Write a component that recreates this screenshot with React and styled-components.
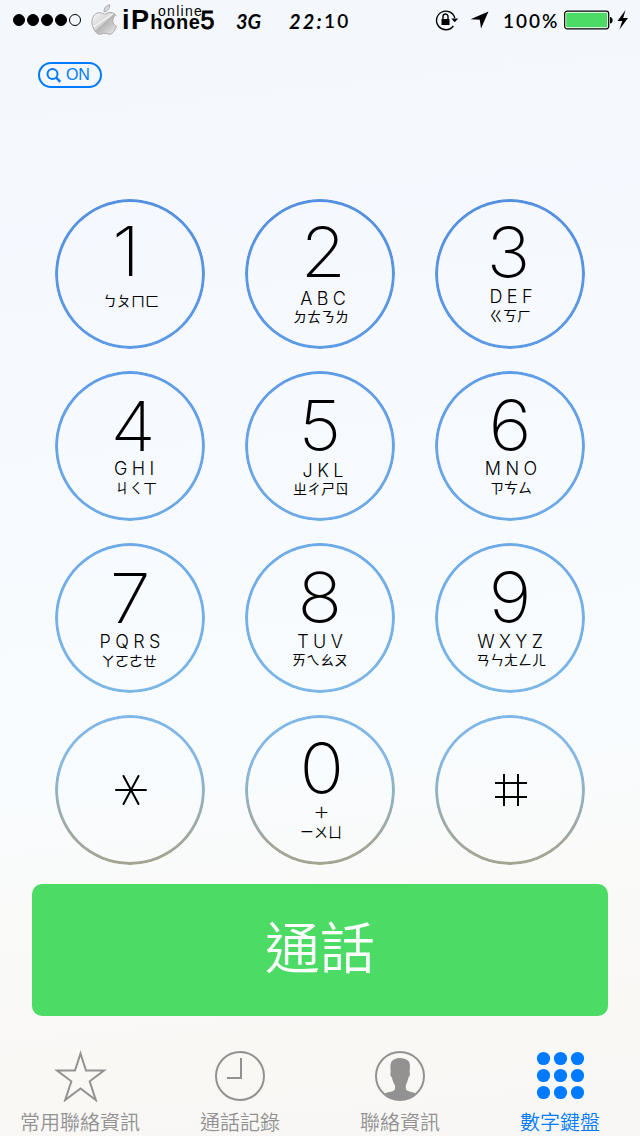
import React from 'react';
import styled, { createGlobalStyle } from 'styled-components';

const BLUE = '#007aff';
const GREY = '#929292';

const GlobalStyle = createGlobalStyle`
  * { box-sizing: border-box; }
  body { margin: 0; }
`;

const Screen = styled.main`
  width: 640px;
  height: 1136px;
  display: flex;
  flex-direction: column;
  overflow: hidden;
  color: #000;
  font-family: Inter, 'Noto Sans CJK TC', sans-serif;
  background: linear-gradient(174deg, #f4f8fd 0%, #f5f8fe 20%, #f7fbff 45%, #f8fcff 64%, #fafaf9 76%, #f9f8f5 90%, #f8f7f5 100%);
`;

const StatusBar = styled.header`
  height: 40px;
  flex: none;
  display: flex;
  align-items: center;
  padding-left: 13px;
`;

const Signal = styled.div`
  display: flex;
  gap: 2px;
  flex: none;
  width: 78px;
`;

const SignalDot = styled.span`
  width: 12px;
  height: 12px;
  border-radius: 50%;
  border: 1px solid #000;
  background: ${(p) => (p.$on ? '#000' : 'transparent')};
`;

const Carrier = styled.div`
  position: relative;
  display: flex;
  flex: none;
  align-items: baseline;
  width: 115px;
  padding-left: 3px;
  height: 40px;
  font-family: 'Liberation Sans', Arial, sans-serif;
  line-height: 40px;
`;

const CarrierPart = styled.span`
  font-size: ${(p) => p.$size}px;
  font-weight: ${(p) => (p.$light ? 400 : 700)};
  letter-spacing: ${(p) => p.$track || 0}px;
  -webkit-text-stroke: ${(p) => (p.$light ? '0.9px #000' : '0')};
`;

const CarrierTag = styled.span`
  position: absolute;
  left: 39px;
  top: 4px;
  font-size: 14px;
  line-height: 14px;
  letter-spacing: 1.3px;
`;

const Hand = styled.span`
  flex: none;
  display: flex;
  font-family: Lato, sans-serif;
  font-size: 20px;
  font-weight: 700;
  font-style: italic;
  letter-spacing: ${(p) => p.$track || 0}px;
  line-height: 24px;
  padding-top: 2px;
  width: ${(p) => p.$width}px;
  margin-left: ${(p) => p.$gap || 0}px;
  white-space: nowrap;
`;

const Upright = styled.span`
  font-style: normal;
  font-weight: 600;
  font-size: 19px;
`;

const StatusIcon = styled.svg`
  display: block;
  flex: none;
  margin-left: ${(p) => p.$gap || 0}px;
`;

const SearchRow = styled.div`
  height: 159px;
  flex: none;
  padding: 22px 0 0 38px;
`;

const SearchPill = styled.button`
  display: flex;
  align-items: center;
  gap: 5px;
  width: 64px;
  height: 26px;
  padding: 0 0 0 6px;
  border: 2px solid ${BLUE};
  border-radius: 13px;
  background: transparent;
  color: ${BLUE};
  font: 400 16px 'Liberation Sans', Arial, sans-serif;
  letter-spacing: -0.3px;
`;

const Keypad = styled.section`
  display: grid;
  grid-template-columns: repeat(3, 150px);
  grid-auto-rows: 150px;
  gap: 22px 40px;
  justify-content: center;
  flex: none;
`;

const Key = styled.button`
  position: relative;
  display: flex;
  flex-direction: column;
  align-items: center;
  justify-content: ${(p) => (p.$centered ? 'center' : 'flex-start')};
  padding: 0;
  border: 0;
  background: none;
  color: #000;
  font-family: inherit;

  &::before {
    content: '';
    position: absolute;
    inset: 0;
    padding: 3px;
    border-radius: 50%;
    background: linear-gradient(${(p) => p.$ring});
    mask: linear-gradient(#000 0 0) content-box exclude, linear-gradient(#000 0 0);
  }
`;

const Line = styled.span`
  display: block;
  flex: none;
  white-space: nowrap;
  margin-top: ${(p) => p.$top}px;
  margin-left: ${(p) => p.$shift * 2}px;
`;

const Digit = styled(Line)`
  height: 52px;
  line-height: 53px;
  font-size: 69px;
  font-weight: 200;
  transform: scaleX(1.07);
`;

const Letters = styled(Line)`
  height: 14px;
  line-height: 14px;
  font-size: 18px;
  font-weight: 300;
  letter-spacing: ${(p) => p.$track}px;
  margin-right: -${(p) => p.$track}px;
`;

const Plus = styled(Letters)`
  font-size: 27px;
  line-height: 12px;
  font-weight: 200;
`;

const Zhuyin = styled(Line)`
  height: 14px;
  line-height: 13px;
  font-family: 'Noto Sans CJK TC', sans-serif;
  font-size: 14px;
`;

const CallButton = styled.button`
  flex: none;
  width: 576px;
  height: 132px;
  margin: 19px 32px 0;
  padding: 0 0 12px;
  border: 0;
  border-radius: 10px;
  background: #4cdb65;
  color: #fff;
  font: 350 55px 'Noto Sans CJK TC', sans-serif;
`;

const TabBar = styled.nav`
  display: grid;
  grid-template-columns: repeat(4, 160px);
  height: 120px;
  padding-top: 34px;
`;

const Tab = styled.div`
  display: flex;
  flex-direction: column;
  align-items: center;
  gap: 5px;
  color: ${(p) => (p.$active ? BLUE : GREY)};
  font: 350 20px/30px 'Noto Sans CJK TC', sans-serif;

  svg { display: block; }
`;

const RINGS = [
  '#5490df, #5c9ae8',
  '#5f9ce8, #6eaae6',
  '#6eaae8, #7bb7e6',
  '#7fb7ea, #86b8e2 30%, #9aaeb0 65%, #a3a596 90%, #a3a592',
];

const KEYS = [
  { d: '1', dt: 26, dx: -4, l: '', z: 'ㄅㄆㄇㄈ', zt: 17, zx: 1 },
  { d: '2', dt: 27, dx: 3, l: 'ABC', lt: 14, lx: 3, z: 'ㄉㄊㄋㄌ', zt: 4, zx: 1 },
  { d: '3', dt: 27, dx: -2, l: 'DEF', lt: 12, lx: 1, z: 'ㄍㄎㄏ', zt: 5, zx: 0 },
  { d: '4', dt: 29, dx: 3, l: 'GHI', lt: 10, lx: 4, z: 'ㄐㄑㄒ', zt: 5, zx: 6 },
  { d: '5', dt: 28, dx: 0, l: 'JKL', lt: 13, lx: 3, z: 'ㄓㄔㄕㄖ', zt: 4, zx: 1 },
  { d: '6', dt: 28, dx: 0, l: 'MNO', lt: 11, lx: 1, z: 'ㄗㄘㄙ', zt: 5, zx: 1 },
  { d: '7', dt: 29, dx: 0, l: 'PQRS', lt: 11, lx: 0, z: 'ㄚㄛㄜㄝ', zt: 5, zx: -1 },
  { d: '8', dt: 28, dx: 0, l: 'TUV', lt: 12, lx: 0, z: 'ㄞㄟㄠㄡ', zt: 4, zx: 0 },
  { d: '9', dt: 28, dx: 0, l: 'WXYZ', lt: 12, lx: 0, z: 'ㄢㄣㄤㄥㄦ', zt: 4, zx: 1 },
  { icon: 'star' },
  { d: '0', dt: 27, dx: 2, l: '+', lt: 11, lx: 1.5, z: 'ㄧㄨㄩ', zt: 6, zx: 1 },
  { icon: 'pound' },
];

const KeyIcon = ({ name }) =>
  name === 'star' ? (
    <svg width="34" height="34" viewBox="0 0 34 34" stroke="#000" strokeWidth="2" strokeLinecap="round" aria-label="*">
      <path d="M3 17H33M10.500 3L25.500 31M25.500 3L10.500 31" />
    </svg>
  ) : (
    <svg width="34" height="34" viewBox="0 0 34 34" stroke="#000" strokeWidth="2" aria-label="#">
      <path d="M2 10H34M2 24H34M11 1V33M25 1V33" fill="none" />
    </svg>
  );

const AppleLogo = () => (
  <StatusIcon width="28" height="32" viewBox="0.5 0 28 32">
    <defs>
      <linearGradient id="silver" x1="0" y1="0" x2="1" y2="1">
        <stop offset="0" stopColor="#f6f6f6" />
        <stop offset=".47" stopColor="#d6d6d6" />
        <stop offset=".5" stopColor="#b4b4b4" />
        <stop offset="1" stopColor="#ececec" />
      </linearGradient>
    </defs>
    <path
      d="M14 10.2C16 9.4 18 8.2 20.500 8.500C22.700 8.700 24.300 9.700 25.300 11.300C20.800 14 21.500 20.300 26 22.200C25 25.500 22.300 30 19.500 30.300C17.500 30.400 16.500 29.300 14.300 29.300C12 29.300 11 30.500 9 30.300C4.800 29.900 1.200 22.500 1.400 17.500C1.700 11.800 5.500 8.500 9 8.600C11 8.700 12.600 9.900 14 10.200Z"
      fill="url(#silver)" stroke="#a4a4a4" strokeWidth=".9"
    />
    <path d="M13.500 7.800C13.300 4.200 15.800 1.300 19.200 .8C19.500 4.300 17 7.500 13.500 7.800Z" fill="#d8d8d8" stroke="#a0a0a0" strokeWidth=".9" />
    <path d="M3 23L22 10" stroke="#fff" strokeWidth="1" />
  </StatusIcon>
);

const FavoritesIcon = () => (
  <svg width="56" height="52" viewBox="0 0 56 52" fill="none" stroke={GREY} strokeWidth="2">
    <path d="M28.500 3.500L34 20.500H52L37.700 31.300L43.800 50L28.500 38.500L13.200 50L19.300 31.300L5 20.500H23Z" />
  </svg>
);

const RecentsIcon = () => (
  <svg width="52" height="52" viewBox="0 0 52 52" fill="none" stroke={GREY} strokeWidth="2">
    <circle cx="26" cy="26" r="24" />
    <path d="M13 28H27V8" />
  </svg>
);

const ContactIcon = () => (
  <svg width="52" height="52" viewBox="0 0 52 52">
    <circle cx="26" cy="26" r="24" fill="none" stroke={GREY} strokeWidth="2" />
    <path
      fill={GREY}
      d="M21 35.500C19.500 33 18.300 30 18 27.500C16.500 27 15.800 23.200 16.800 22.300C16.300 18 16 14.500 17.500 11.500C19.500 9 23 7.800 26.500 8C30.500 8.200 34 9.800 35.200 12C36.500 15 35.900 19 35.500 22.300C36.500 23.200 35.800 27 34.400 27.500C34 30 32.800 33 31.800 35.500C31.800 38 31.800 39.500 33 40.600C35.500 42 39 42.300 41.500 43.200C37 48 31.500 50 26 50C20.500 50 15 48 11 43.200C13.500 42.200 17.500 42 20 40.500C21.200 39.500 21.200 38 21 35.500Z"
    />
  </svg>
);

const KeypadIcon = () => (
  <svg width="52" height="52" viewBox="0 0 52 52" fill={BLUE}>
    {[8.5, 25.5, 42.5].map((y) => [9.5, 26.5, 43.5].map((x) => <circle key={`${x}-${y}`} cx={x} cy={y} r="6.600" />))}
  </svg>
);

const TABS = [
  { label: '常用聯絡資訊', Icon: FavoritesIcon },
  { label: '通話記錄', Icon: RecentsIcon },
  { label: '聯絡資訊', Icon: ContactIcon },
  { label: '數字鍵盤', Icon: KeypadIcon, active: true },
];

export default function App() {
  return (
    <Screen>
      <GlobalStyle />
      <StatusBar>
        <Signal>
          {[1, 1, 1, 1, 0].map((on, i) => <SignalDot key={i} $on={on} />)}
        </Signal>
        <AppleLogo />
        <Carrier>
          <CarrierPart $size={27} $track={1.4}>iP</CarrierPart>
          <CarrierPart $size={20} $track={0.6}>hone</CarrierPart>
          <CarrierPart $size={25} $light>5</CarrierPart>
          <CarrierTag>online</CarrierTag>
        </Carrier>
        <Hand $width={28} $gap={2}>3G</Hand>
        <Hand $width={70} $gap={25} $track={2.2}>22:<Upright>10</Upright></Hand>
        <StatusIcon $gap={76} width="24" height="22" viewBox="0 0 24 22" fill="none" stroke="#000" strokeWidth="1.400">
          <path d="M18.300 17A9.300 9.300 0 1 1 19.800 9" />
          <path d="M16.300 9.500H23.200L19.700 13.300Z" fill="#000" stroke="none" />
          <path d="M6.500 10H14.500V16H6.500Z" fill="#000" stroke="none" />
          <path d="M8 10V7.500A2.500 2.500 0 0 1 13 7.500V10" />
        </StatusIcon>
        <StatusIcon $gap={11} width="19" height="18" viewBox="0 0 19 18">
          <path d="M18.500 .5L11 17.500L9.800 8.700L.5 8.300Z" />
        </StatusIcon>
        <Hand $width={61} $gap={14} $track={2}><Upright>100%</Upright></Hand>
        <StatusIcon width="50" height="20" viewBox="0 0 50 20">
          <rect x=".7" y="1.200" width="44" height="17.600" rx="2.500" fill="#fff" stroke="#000" strokeWidth="1.200" />
          <rect x="2.200" y="2.700" width="41" height="14.600" rx="1" fill="#4cdb65" />
          <path d="M46 7C49.500 7 49.500 13.500 46 13.500Z" />
        </StatusIcon>
        <StatusIcon $gap={3} width="12" height="20" viewBox="0 0 12 20">
          <path d="M8.500 0L.5 11H5.200L2.500 19.500L11 8H6.200Z" />
        </StatusIcon>
      </StatusBar>

      <SearchRow>
        <SearchPill>
          <svg width="15" height="15" viewBox="0 0 15 15" fill="none" stroke={BLUE} strokeWidth="2">
            <circle cx="6.500" cy="6" r="5" />
            <path d="M10 9.500L14.300 13.800" strokeWidth="2.400" />
          </svg>
          ON
        </SearchPill>
      </SearchRow>

      <Keypad>
        {KEYS.map((k, i) => (
          <Key key={i} $ring={RINGS[Math.floor(i / 3)]} $centered={!!k.icon}>
            {k.icon ? <KeyIcon name={k.icon} /> : (
              <>
                <Digit $top={k.dt} $shift={k.dx}>{k.d}</Digit>
                {k.l === '+' && <Plus $top={k.lt} $shift={k.lx} $track={0}>+</Plus>}
                {k.l && k.l !== '+' && <Letters $top={k.lt} $shift={k.lx} $track={4.4}>{k.l}</Letters>}
                <Zhuyin $top={k.zt} $shift={k.zx}>{k.z}</Zhuyin>
              </>
            )}
          </Key>
        ))}
      </Keypad>

      <CallButton>通話</CallButton>

      <TabBar>
        {TABS.map(({ label, Icon, active }) => (
          <Tab key={label} $active={active}>
            <Icon />
            {label}
          </Tab>
        ))}
      </TabBar>
    </Screen>
  );
}
